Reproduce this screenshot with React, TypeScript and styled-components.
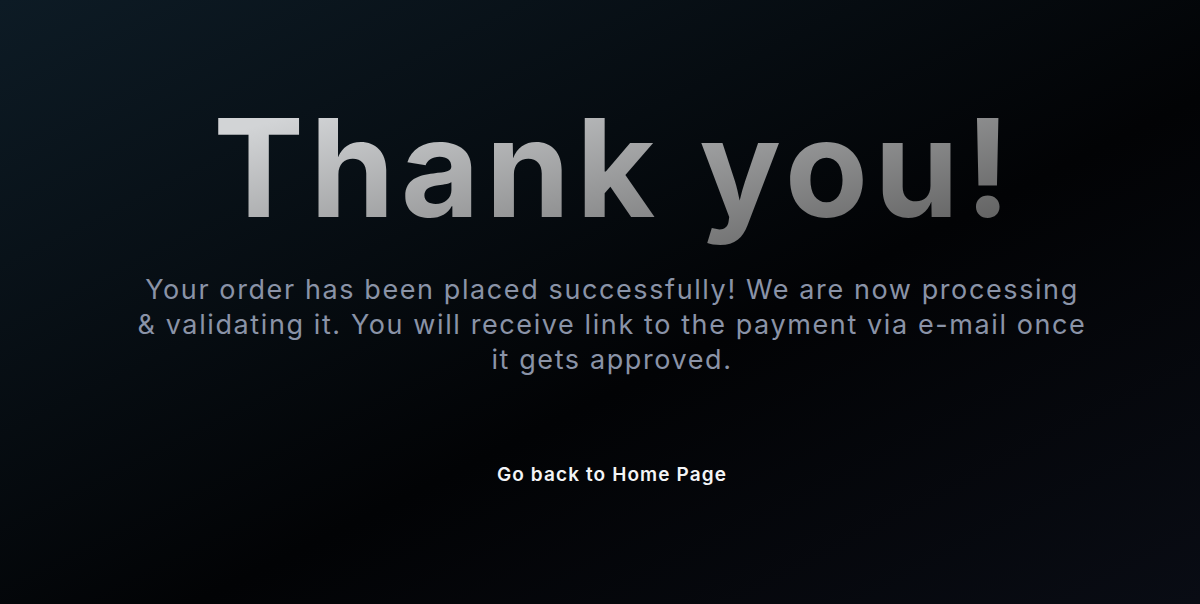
import React from "react";
import styled, { createGlobalStyle } from "styled-components";

const Global = createGlobalStyle`
  html, body { margin: 0; padding: 0; }
  body { font-family: Inter, "Noto Sans", sans-serif; background: #000; }
`;

const Page = styled.main`
  min-height: 100vh;
  box-sizing: border-box;
  display: flex;
  flex-direction: column;
  align-items: center;
  justify-content: center;
  background: linear-gradient(to bottom right, #0d1b25 0%, #020305 58%, #090c14 100%);
  text-align: center;
  padding: 0 0 18px 24px;
`;

const Title = styled.h1`
  display: inline-block;
  margin: 0 -6px 0 0;
  font-family: Inter, "Noto Sans", sans-serif;
  font-weight: 700;
  font-size: 136px;
  line-height: 1;
  letter-spacing: 6px;
  background: linear-gradient(165deg, #d2d4d6 10%, #5a5a5a 95%);
  -webkit-background-clip: text;
  background-clip: text;
  color: transparent;
  padding-bottom: 20px;
`;

const Message = styled.p`
  margin: 16px 0 0;
  max-width: 960px;
  font-family: Inter, "Noto Sans", sans-serif;
  font-weight: 400;
  font-size: 27px;
  line-height: 35px;
  letter-spacing: 1.6px;
  color: #8a93a7;
`;

const HomeLink = styled.a`
  margin-top: 86px;
  font-family: Inter, "Noto Sans", sans-serif;
  font-weight: 600;
  font-size: 19px;
  letter-spacing: 1.1px;
  color: #f3f4f6;
  text-decoration: none;
  cursor: pointer;
`;

const message =
  "Your order has been placed successfully! We are now processing &\u00a0validating it. You will receive link to the payment via e-mail once it gets approved.";

export default function App() {
  return (
    <>
      <Global />
      <Page>
        <Title>Thank you!</Title>
        <Message>{message}</Message>
        <HomeLink href="#">Go back to Home Page</HomeLink>
      </Page>
    </>
  );
}
